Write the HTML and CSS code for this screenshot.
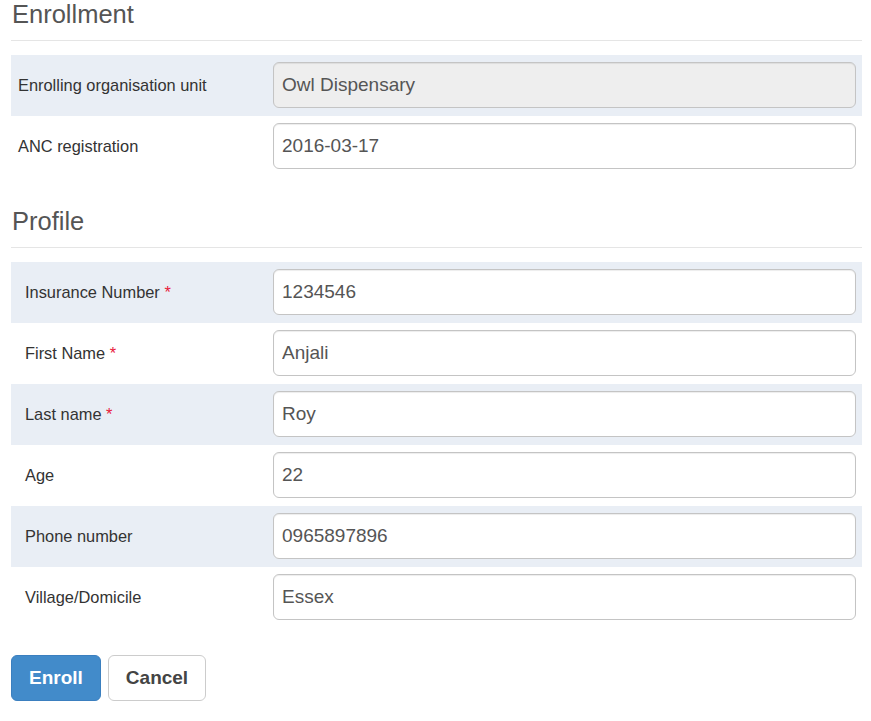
FILE: index.html
```html
<!DOCTYPE html>
<html lang="en">
<head>
<meta charset="utf-8">
<title>Enrollment</title>
<link rel="stylesheet" href="styles.css">
</head>
<body>
<div class="page">
  <h3 class="section-title">Enrollment</h3>
  <div class="form-table">
    <div class="row alt">
      <div class="label enr">Enrolling organisation unit</div>
      <div class="field"><input class="input" type="text" value="Owl Dispensary" disabled></div>
    </div>
    <div class="row">
      <div class="label enr">ANC registration</div>
      <div class="field"><input class="input" type="text" value="2016-03-17"></div>
    </div>
  </div>

  <h3 class="section-title second">Profile</h3>
  <div class="form-table">
    <div class="row alt">
      <div class="label">Insurance Number <span class="req">*</span></div>
      <div class="field"><input class="input" type="text" value="1234546"></div>
    </div>
    <div class="row">
      <div class="label">First Name <span class="req">*</span></div>
      <div class="field"><input class="input" type="text" value="Anjali"></div>
    </div>
    <div class="row alt">
      <div class="label">Last name <span class="req">*</span></div>
      <div class="field"><input class="input" type="text" value="Roy"></div>
    </div>
    <div class="row">
      <div class="label">Age</div>
      <div class="field"><input class="input" type="text" value="22"></div>
    </div>
    <div class="row alt">
      <div class="label">Phone number</div>
      <div class="field"><input class="input" type="text" value="0965897896"></div>
    </div>
    <div class="row">
      <div class="label">Village/Domicile</div>
      <div class="field"><input class="input" type="text" value="Essex"></div>
    </div>
  </div>

  <div class="actions">
    <button class="btn btn-primary" type="button">Enroll</button>
    <button class="btn btn-default" type="button">Cancel</button>
  </div>
</div>
</body>
</html>
```

FILE: styles.css
```css
* {
  box-sizing: border-box;
}

html, body {
  margin: 0;
  padding: 0;
  background: #ffffff;
}

body {
  font-family: "Liberation Sans", Arial, Helvetica, sans-serif;
  color: #333333;
}

.page {
  width: 851px;
  margin-left: 11px;
}

.section-title {
  margin: 0 0 14px 0;
  padding: 1px 0 13px 1px;
  font-size: 25.5px;
  line-height: 26px;
  font-weight: normal;
  color: #555555;
  border-bottom: 1px solid #e5e5e5;
}

.section-title.second {
  margin-top: 30px;
}

.form-table {
  display: flex;
  flex-direction: column;
}

.row {
  display: grid;
  grid-template-columns: 262px 1fr;
  align-items: center;
  height: 61px;
  padding: 7px 6px 8px 0;
}

.row.alt {
  background: #e9eef5;
}

.label {
  padding-left: 14px;
  font-size: 16.4px;
  color: #333333;
}

.label.enr {
  padding-left: 7px;
}

.req {
  color: #e8203a;
}

.field {
  display: flex;
}

.input {
  width: 100%;
  height: 46px;
  padding: 0 8px;
  font-family: "Liberation Sans", Arial, Helvetica, sans-serif;
  font-size: 19px;
  color: #555555;
  background: #ffffff;
  border: 1px solid #c4c4c4;
  border-radius: 6px;
  box-shadow: inset 0 1px 1px rgba(0, 0, 0, 0.075);
  outline: none;
}

.input:disabled {
  background: #eeeeee;
  color: #555555;
  opacity: 1;
}

.actions {
  display: flex;
  gap: 7px;
  margin-top: 27px;
}

.btn {
  height: 46px;
  padding: 0 17px;
  font-family: "Liberation Sans", Arial, Helvetica, sans-serif;
  font-size: 19px;
  font-weight: bold;
  border-radius: 6px;
  border: 1px solid transparent;
  cursor: pointer;
}

.btn-primary {
  background: #428bca;
  border-color: #3b7fbf;
  color: #ffffff;
}

.btn-default {
  background: #ffffff;
  border-color: #cccccc;
  color: #444444;
}
```
